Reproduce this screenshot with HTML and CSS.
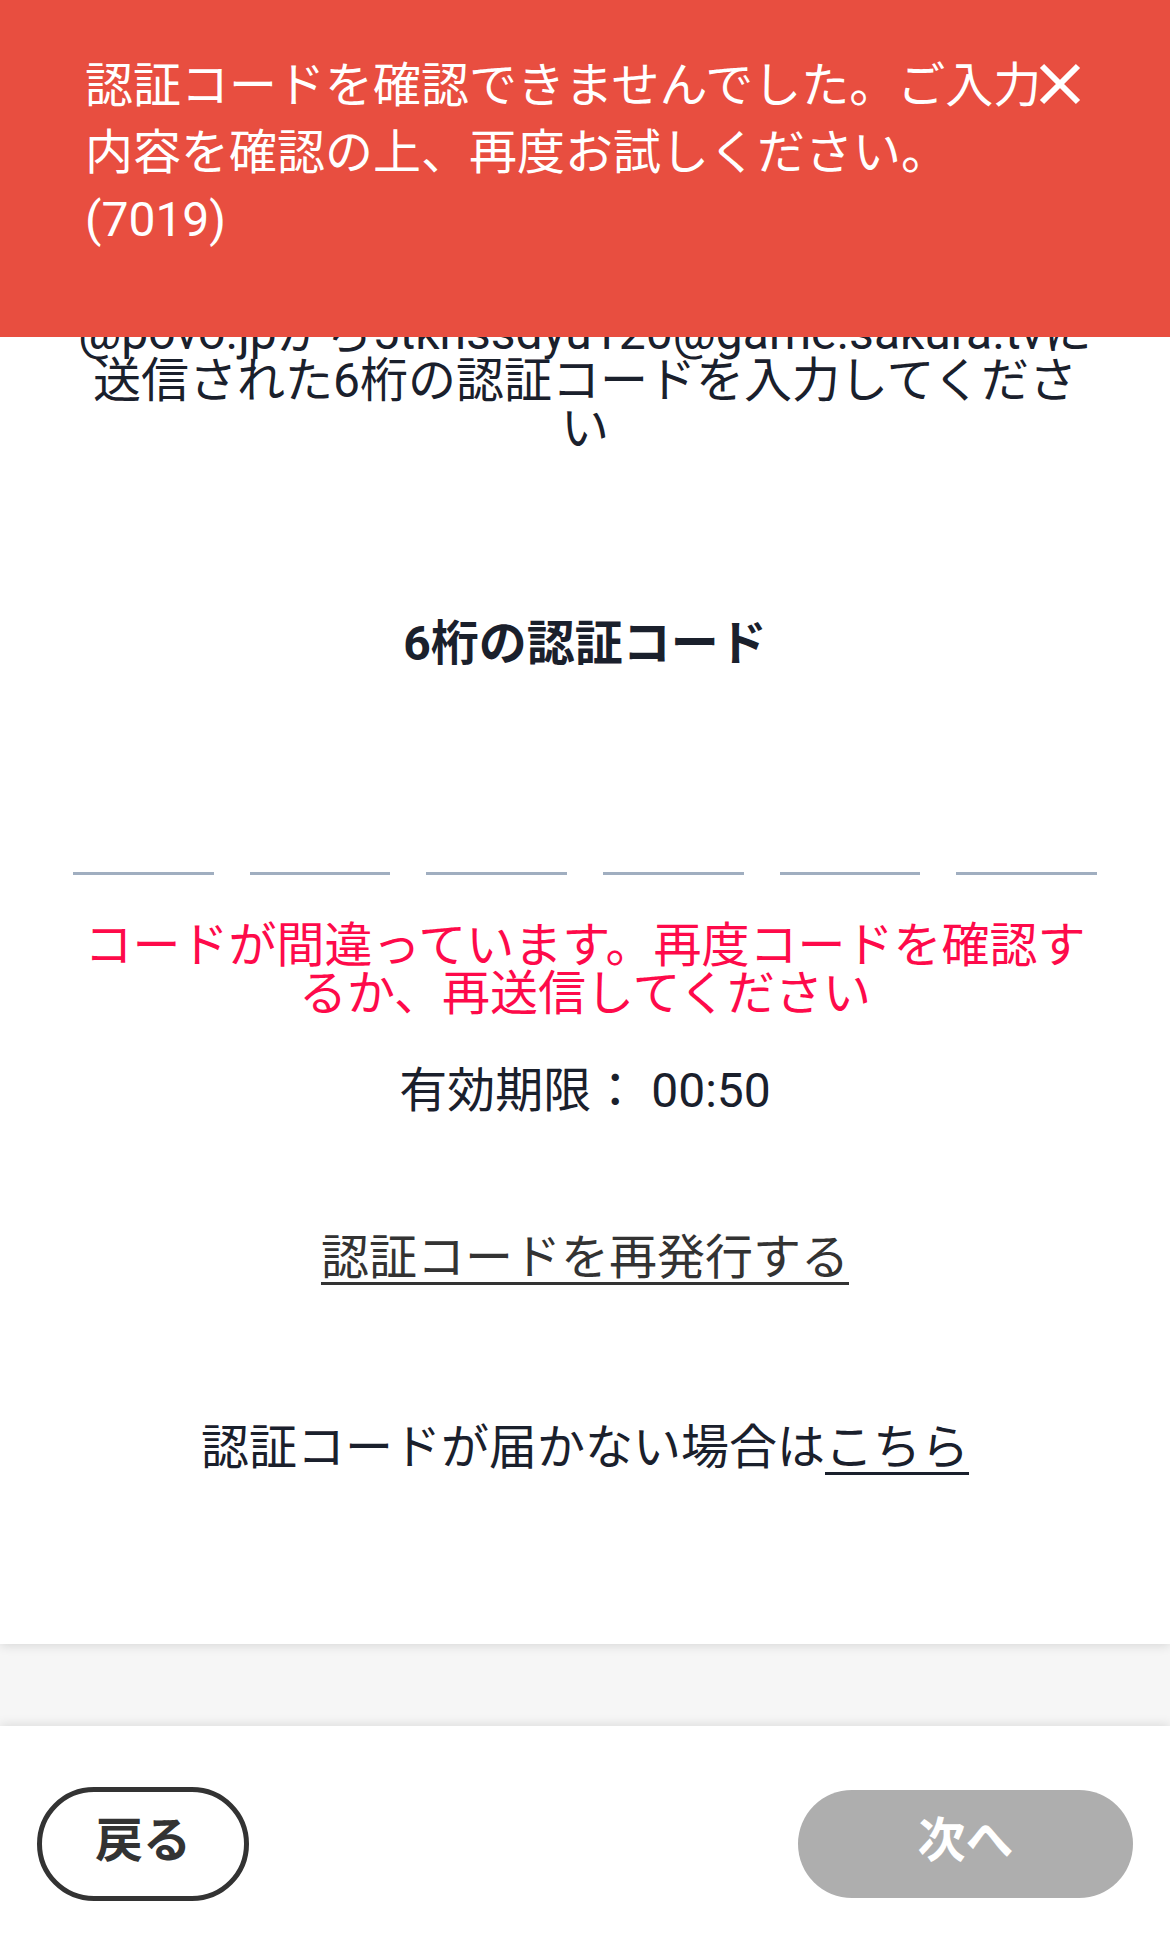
FILE: index.html
```html
<!DOCTYPE html>
<html lang="ja">
<head>
    <meta charset="UTF-8">
    <title>認証コード入力</title>
    <link rel="stylesheet" href="styles.css">
</head>
<body>

<div class="toast">
    <p class="toast-msg">認証コードを確認できませんでした。ご入力内容を確認の上、再度お試しください。<br>(7019)</p>
    <div class="toast-close">
        <svg width="42" height="42" viewBox="0 0 42 42">
            <path d="M3 3 L39 39 M39 3 L3 39" stroke="#ffffff" stroke-width="6" fill="none"/>
        </svg>
    </div>
</div>

<div class="card">
    <p class="lead">ご登録のメールアドレス宛てにnoreply<br>@povo.jpから5tkhssdyu120@game.sakura.tvに<br>送信された6桁の認証コードを入力してくださ<br>い</p>

    <h2 class="code-title">6桁の認証コード</h2>

    <div class="code-inputs">
        <input class="code-box" type="text" maxlength="1">
        <input class="code-box" type="text" maxlength="1">
        <input class="code-box" type="text" maxlength="1">
        <input class="code-box" type="text" maxlength="1">
        <input class="code-box" type="text" maxlength="1">
        <input class="code-box" type="text" maxlength="1">
    </div>

    <p class="error-text">コードが間違っています。再度コードを確認す<br>るか、再送信してください</p>

    <p class="expiry">有効期限： 00:50</p>

    <p class="reissue"><a href="#">認証コードを再発行する</a></p>

    <p class="help">認証コードが届かない場合は<a href="#">こちら</a></p>
</div>

<div class="footer">
    <button class="btn btn-back">戻る</button>
    <button class="btn btn-next" disabled>次へ</button>
</div>

</body>
</html>
```

FILE: styles.css
```css
html, body {
    margin: 0;
    padding: 0;
    background: #f6f6f6;
    font-family: Roboto, "Noto Sans CJK JP", sans-serif;
    color: #1a202c;
    font-size: 48px;
    line-height: 48px;
}

p {
    margin: 0;
}

/* error toast on top */
.toast {
    position: absolute;
    top: 0;
    left: 0;
    right: 0;
    height: 337px;
    box-sizing: border-box;
    padding: 52px 94px 0 85px;
    background: #e84e40;
    color: #ffffff;
    z-index: 10;
}

.toast-msg {
    line-height: 67px;
}

.toast-close {
    position: absolute;
    top: 63px;
    left: 1039px;
    width: 42px;
    height: 42px;
}

.toast-close svg {
    display: block;
}

.card {
    background: #ffffff;
    padding: 261px 70px 172px;
    text-align: center;
    box-shadow: 0 2px 10px rgba(0, 0, 0, 0.12);
    position: relative;
}

.code-title {
    margin: 167px 0 0;
    font-size: 48px;
    line-height: 48px;
    font-weight: bold;
}

.code-inputs {
    display: flex;
    gap: 36px;
    margin: 84px 3px 0;
}

.code-box {
    flex: 1;
    min-width: 0;
    height: 123px;
    box-sizing: border-box;
    border: none;
    border-bottom: 3px solid #a0aec0;
    background: transparent;
    outline: none;
    padding: 0;
    font-family: inherit;
    font-size: 48px;
    text-align: center;
}

.error-text {
    margin-top: 47px;
    color: #fe0a4a;
}

.expiry {
    margin-top: 49px;
}

.reissue {
    margin-top: 119px;
}

.reissue a {
    color: #333333;
    text-decoration: underline;
    text-decoration-thickness: 3px;
    text-underline-offset: 8px;
}

.help {
    margin-top: 142px;
}

.help a {
    color: #1a202c;
    text-decoration: underline;
    text-decoration-thickness: 3px;
    text-underline-offset: 8px;
}

.footer {
    margin-top: 82px;
    height: 211px;
    box-sizing: border-box;
    padding: 61px 37px 36px;
    background: #ffffff;
    box-shadow: 0 -2px 10px rgba(0, 0, 0, 0.1);
    display: flex;
    justify-content: space-between;
    align-items: center;
}

.btn {
    font-family: inherit;
    font-size: 48px;
    line-height: 1;
    font-weight: bold;
    border-radius: 60px;
    padding: 0 0 6px;
}

.btn-back {
    width: 212px;
    height: 114px;
    border: 5px solid #333333;
    background: #ffffff;
    color: #333333;
}

.btn-next {
    width: 335px;
    height: 108px;
    border: none;
    background: #aeaeae;
    color: #ffffff;
}
```
